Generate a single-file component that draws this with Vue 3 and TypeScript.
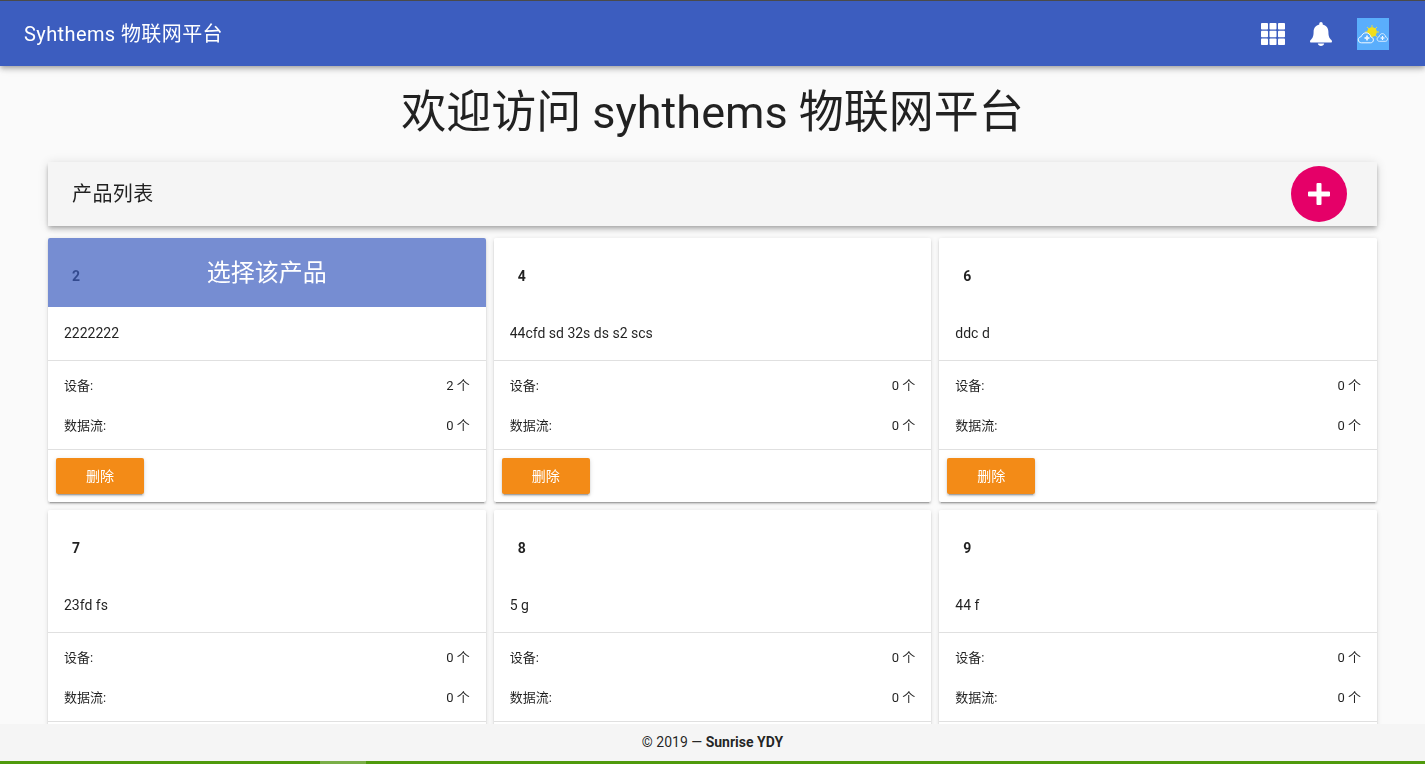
<template>
  <div class="app">
    <header class="topbar">
      <div class="brand">Syhthems 物联网平台</div>
      <div class="spacer"></div>
      <svg class="icon-grid" width="24" height="22" viewBox="0 0 24 22">
        <template v-for="row in 3" :key="row">
          <rect
            v-for="col in 3"
            :key="col"
            :x="(col - 1) * 8.5"
            :y="(row - 1) * 7.7"
            width="7"
            height="6.6"
            rx="0.8"
            fill="#fff"
          />
        </template>
      </svg>
      <svg class="icon-bell" width="22" height="24" viewBox="0 0 22 24">
        <path
          fill="#fff"
          d="M11 0c-1 0-1.700.8-1.700 1.700v.9C5.800 3.400 3.600 6.300 3.600 9.800c0 5-1.200 6.500-2.700 8-.6.6-.9 1-.9 1.600 0 .5.400 1 1 1h20c.6 0 1-.5 1-1 0-.6-.3-1-.9-1.600-1.500-1.500-2.700-3-2.700-8 0-3.500-2.200-6.400-5.700-7.200v-.9C12.700.8 12 0 11 0zM7.800 21.500c.2 1.500 1.600 2.500 3.200 2.500s3-1 3.200-2.500z"
        />
      </svg>
      <svg class="avatar" width="32" height="32" viewBox="0 0 32 32">
        <rect width="32" height="32" fill="#5aaefc" />
        <g stroke="#f6e62c" stroke-width="0.9">
          <path d="M15 7v14M8 14h14M10 9l10 10M20 9l-10 10" />
        </g>
        <circle cx="15" cy="14" r="4.800" fill="#f2de1c" />
        <path
          d="M4.500 24.800c-2.100 0-3.200-1.400-3.200-3 0-1.700 1.200-3 2.900-3.100 .8-2.300 2.500-3.900 4.800-3.900 2.600 0 4.600 1.900 4.900 4.300 1.500.2 2.500 1.300 2.500 2.800 0 1.700-1.200 2.900-2.800 2.900z"
          fill="#5aaefc"
          stroke="#f4f9ff"
          stroke-width="1"
        />
        <path
          d="M22.300 23.300c-1.300 0-2.200-1-2.200-2.200 0-1.200.8-2.100 1.900-2.200 .5-2 1.800-3.300 3.300-3.300 1.800 0 3.100 1.500 3.300 3.400 1.100.1 1.900.9 1.900 2 0 1.300-.9 2.300-2 2.300z"
          fill="#5aaefc"
          stroke="#f4f9ff"
          stroke-width="0.8"
        />
        <path d="M10 17.500v5M7.500 20h5" stroke="#fff" stroke-width="1.500" />
        <circle cx="10" cy="20" r="1.500" fill="#e8f3ff" />
        <path d="M25.500 18v4M23.500 20h4" stroke="#fff" stroke-width="1.100" />
        <circle cx="25.500" cy="20" r="1" fill="#e8f3ff" />
      </svg>
    </header>

    <main class="content">
      <h1 class="welcome">欢迎访问 syhthems 物联网平台</h1>

      <div class="list-bar">
        <div class="list-title">产品列表</div>
        <button class="fab" type="button" aria-label="添加产品">
          <svg width="22" height="22" viewBox="0 0 22 22">
            <path fill="#fff" d="M8.500 1a1 1 0 0 1 1-1h3a1 1 0 0 1 1 1v7.500H21a1 1 0 0 1 1 1v3a1 1 0 0 1-1 1h-7.500V21a1 1 0 0 1-1 1h-3a1 1 0 0 1-1-1v-7.500H1a1 1 0 0 1-1-1v-3a1 1 0 0 1 1-1h7.500z" />
          </svg>
        </button>
      </div>

      <section class="grid">
        <article v-for="(p, i) in products" :key="p.id" class="card">
          <div class="card-head">
            <span class="card-id">{{ p.id }}</span>
            <div v-if="i === 0" class="overlay">选择该产品</div>
          </div>
          <div class="card-desc">{{ p.desc }}</div>
          <div class="card-stats">
            <div class="stat">
              <span>设备:</span>
              <span>{{ p.devices }} 个</span>
            </div>
            <div class="stat">
              <span>数据流:</span>
              <span>{{ p.streams }} 个</span>
            </div>
          </div>
          <div class="card-actions">
            <button v-if="i < 3" class="btn-delete" type="button">删除</button>
          </div>
        </article>
      </section>
    </main>

    <footer class="footer">
      <div class="copy">© 2019 — <strong>Sunrise YDY</strong></div>
      <div class="progress"><span class="progress-mark"></span></div>
    </footer>
  </div>
</template>

<script setup lang="ts">
interface Product {
  id: number;
  desc: string;
  devices: number;
  streams: number;
}

const products: Product[] = [
  { id: 2, desc: "2222222", devices: 2, streams: 0 },
  { id: 4, desc: "44cfd sd 32s ds s2 scs", devices: 0, streams: 0 },
  { id: 6, desc: "ddc d", devices: 0, streams: 0 },
  { id: 7, desc: "23fd fs", devices: 0, streams: 0 },
  { id: 8, desc: "5 g", devices: 0, streams: 0 },
  { id: 9, desc: "44 f", devices: 0, streams: 0 }
];
</script>

<style>
html,
body {
  margin: 0;
  overflow: hidden;
}
</style>

<style scoped>
.app {
  height: 100vh;
  display: flex;
  flex-direction: column;
  overflow: hidden;
  background-color: #fafafa;
  color: rgba(0, 0, 0, 0.87);
  font-family: Roboto, "Noto Sans CJK SC", sans-serif;
  line-height: 1.5;
}

.topbar {
  flex: none;
  height: 65px;
  border-top: 1px solid #4a4a4a;
  padding: 0 36px 0 24px;
  display: flex;
  align-items: center;
  background-color: #3c5dbf;
  color: #fff;
  position: relative;
  z-index: 2;
  box-shadow: 0 2px 4px -1px rgba(0, 0, 0, 0.2), 0 4px 5px 0 rgba(0, 0, 0, 0.14),
    0 1px 10px 0 rgba(0, 0, 0, 0.12);
}

.brand {
  font-size: 20px;
  line-height: 1;
  letter-spacing: 0.02em;
}

.spacer {
  flex: 1;
}

.icon-grid {
  margin-right: 25px;
}

.icon-bell {
  margin-right: 25px;
}

.content {
  flex: 1;
  min-height: 0;
  overflow: hidden;
  padding: 0 48px;
  transform: translateZ(0);
}

.welcome {
  margin: 0;
  height: 94px;
  padding-bottom: 2px;
  display: flex;
  align-items: center;
  justify-content: center;
  font-size: 45px;
  font-weight: 400;
  line-height: 48px;
}

.list-bar {
  height: 64px;
  padding: 0 30px 0 24px;
  display: flex;
  align-items: center;
  justify-content: space-between;
  background-color: #f5f5f5;
  box-shadow: 0 2px 4px -1px rgba(0, 0, 0, 0.2), 0 4px 5px 0 rgba(0, 0, 0, 0.14),
    0 1px 10px 0 rgba(0, 0, 0, 0.12);
}

.list-title {
  font-size: 20px;
  line-height: 1;
  letter-spacing: 0.02em;
}

.fab {
  width: 56px;
  height: 56px;
  padding: 0;
  border: none;
  border-radius: 50%;
  background-color: #e50068;
  display: flex;
  align-items: center;
  justify-content: center;
}

.grid {
  margin-top: 12px;
  display: grid;
  grid-template-columns: repeat(3, 1fr);
  gap: 8px;
}

.card {
  border-radius: 2px;
  background-color: #fff;
  overflow: hidden;
  box-shadow: 0 3px 1px -2px rgba(0, 0, 0, 0.2), 0 2px 2px 0 rgba(0, 0, 0, 0.14),
    0 1px 5px 0 rgba(0, 0, 0, 0.12);
}

.card-head {
  height: 69px;
  padding: 0 24px;
  display: flex;
  align-items: center;
  position: relative;
  font-size: 14px;
  font-weight: 700;
}

.card-id {
  padding-top: 7px;
  line-height: 16px;
}

.overlay {
  position: absolute;
  inset: 0;
  display: flex;
  align-items: center;
  justify-content: center;
  background-color: rgba(60, 93, 191, 0.7);
  color: #fff;
  font-size: 24px;
  font-weight: 400;
  box-sizing: border-box;
}

.card-desc {
  height: 53px;
  padding: 0 16px;
  display: flex;
  align-items: center;
  font-size: 14px;
}

.card-stats {
  height: 88px;
  padding: 0 16px;
  display: flex;
  flex-direction: column;
  justify-content: center;
  border-top: 1px solid #e0e0e0;
  border-bottom: 1px solid #e0e0e0;
  font-size: 13px;
}

.stat {
  height: 40px;
  box-sizing: border-box;
  padding-top: 2px;
  display: flex;
  align-items: center;
  justify-content: space-between;
}

.card-actions {
  height: 36px;
  padding: 8px;
  display: flex;
}

.btn-delete {
  width: 88px;
  height: 36px;
  padding: 0 0 2px;
  border: none;
  border-radius: 2px;
  background-color: #f38b17;
  color: #fff;
  font-family: inherit;
  font-size: 14px;
  box-shadow: 0 3px 1px -2px rgba(0, 0, 0, 0.2), 0 2px 2px 0 rgba(0, 0, 0, 0.14),
    0 1px 5px 0 rgba(0, 0, 0, 0.12);
}

.footer {
  flex: none;
  height: 40px;
  display: flex;
  flex-direction: column;
  background-color: #f5f5f5;
  font-size: 14px;
  position: relative;
  z-index: 1;
}

.copy {
  flex: 1;
  display: flex;
  align-items: center;
  justify-content: center;
  white-space: pre;
}

.progress {
  height: 3px;
  background-color: #4f9a0c;
  position: relative;
}

.progress-mark {
  position: absolute;
  left: 320px;
  top: 0;
  bottom: 0;
  width: 46px;
  background-color: #7aae47;
}
</style>
